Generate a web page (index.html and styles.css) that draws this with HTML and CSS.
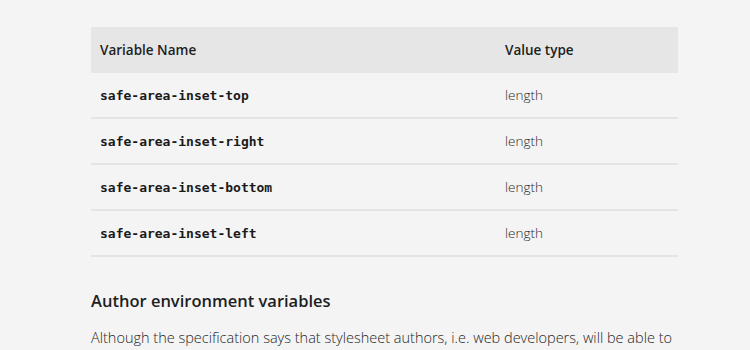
FILE: index.html
```html
<!DOCTYPE html>
<html lang="en">
<head>
    <meta charset="UTF-8">
    <meta name="viewport" content="width=device-width, initial-scale=1.0">
    <title>Environment variables</title>
    <link rel="stylesheet" href="styles.css">
</head>
<body>
    <div class="content">
        <table class="vars">
            <thead>
                <tr>
                    <th class="col-name">Variable Name</th>
                    <th>Value type</th>
                </tr>
            </thead>
            <tbody>
                <tr>
                    <td><code>safe-area-inset-top</code></td>
                    <td>length</td>
                </tr>
                <tr>
                    <td><code>safe-area-inset-right</code></td>
                    <td>length</td>
                </tr>
                <tr>
                    <td><code>safe-area-inset-bottom</code></td>
                    <td>length</td>
                </tr>
                <tr>
                    <td><code>safe-area-inset-left</code></td>
                    <td>length</td>
                </tr>
            </tbody>
        </table>

        <h3>Author environment variables</h3>
        <p>Although the specification says that stylesheet authors, i.e. web developers, will be able to</p>
    </div>
</body>
</html>
```

FILE: styles.css
```css
body {
    background-color: #f4f4f4; /* Light gray page */
    margin: 0;
    font-family: "Open Sans", "Noto Sans", sans-serif;
    color: #333;
}
.content {
    width: 587px;
    margin-left: 91px;
    padding-top: 27px;
}
.vars {
    width: 100%;
    border-collapse: collapse;
    font-size: 13.5px;
}
.vars th {
    background-color: #e6e6e6; /* Header band */
    text-align: left;
    font-weight: 600;
    color: #1e1e1e;
    height: 46px;
    padding: 0 9px;
}
.col-name {
    width: 387px;
}
.vars td {
    height: 44px;
    padding: 0 9px;
    border-bottom: 2px solid #e4e4e4;
    font-weight: 300;
    color: #2a2a2a;
}
code {
    font-family: "DejaVu Sans Mono", monospace;
    font-weight: bold;
    font-size: 13px;
    color: #1a1a1a;
}
h3 {
    margin: 32px 0 0;
    font-size: 16.5px;
    font-weight: 600;
    color: #1e1e1e;
}
p {
    margin: 16px 0 0;
    font-size: 14.5px;
    font-weight: 300;
    color: #262626;
    white-space: nowrap;
}
```
